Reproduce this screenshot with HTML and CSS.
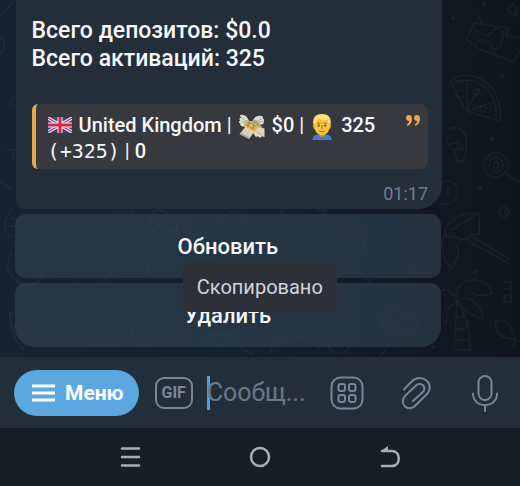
FILE: index.html
```html
<!DOCTYPE html>
<html lang="ru">
<head>
<meta charset="utf-8">
<meta name="viewport" content="width=device-width, initial-scale=1">
<title>Чат</title>
<link rel="stylesheet" href="styles.css">
</head>
<body>
<div class="app">
  <main class="chat">
    <svg class="doodles" viewBox="0 0 520 357" preserveAspectRatio="xMaxYMin slice" aria-hidden="true">
      <g fill="none" stroke="currentColor" stroke-width="1.5" stroke-linecap="round" stroke-linejoin="round">
        <path d="M474 23l35 5-3 8 14 2M474 23l-7 17 12 9 35 13 6-12M474 30l14 6 8-8 8 4-4 15-7 3-3-7-7-5-8 6M478 16l4 6M508 8l5-4 4 5-1 7-7-4z"/>
        <path d="M450 81c10-8 28-9 40 5 8 10 12 22 10 35l-34-10zM455 82c15-5 28 1 34 9 5 7 8 16 7 26M467 84v27l26-9M466 111l13-22"/>
        <circle cx="460" cy="94" r="4"/><circle cx="476" cy="92" r="3"/><circle cx="483" cy="109" r="3"/>
        <path d="M449 129c8-4 16 1 17 9v18l-4 6-5-2-3-10c-6-4-8-8-7-12M451 144l10-2M452 150l11-2"/>
        <circle cx="496" cy="165" r="12"/><circle cx="496" cy="165" r="7"/><circle cx="496" cy="165" r="3"/>
        <path d="M506 174l14 8M441 183c8-5 16 0 17 9 0 9-9 14-17 12M448 186v10"/>
        <path d="M444 235c2-12 15-24 36-22l-1 22c-5-2-9-1-11 5-7-2-10 0-11 8 3 8 0 14-6 20-7-8-12-19-7-33zM444 235l24 5M451 230l28-17M470 242l38 21M473 237l36 22"/>
        <circle cx="504" cy="212" r="5"/><path d="M504 209l2 6M504 282h7v20h-7v-7h6M504 289h6"/>
        <path d="M456 302c-5-14-12-15-18-9M457 302c-4-13 5-21 14-22 9-1 20 5 21 13-8 4-14 4-20 0M458 302c8-9 22-1 25 17-10-1-18-8-25-17zM457 302c-8 3-12 11-11 21M457 302l-3 48h16c0-22-5-38-13-48M456 318l8-2M455 330l12-2M455 341l14-2"/>
        <path d="M496 323c5-7 15 0 19 16l5 2M496 323c-2 9 5 16 19 16l-2 8"/>
        <path d="M1 16l12-14M0 37c7 4 5 15-1 17M15 97c-5 1-5 8 0 9M6 150h9l-3 8M0 181l11 8M12 209c-7 8-10 19-3 26 3 3 8 1 12-2M11 218l9 2M10 226l10 1M12 252c-10 16 0 32 16 33 12 0 18-12 14-22M9 313l18 2c8 6 0 25-4 35l-8-12zM10 328l14-2"/>
        <path d="M77 215l12 11M112 212h22l-3 8M155 210c-8 9-7 19 3 23l19-3c-1-12-10-21-22-20M161 224c-9 3-9 15-1 18l12-7M220 220c8-10 18-11 24-2M281 210l5 7h-5zM316 210h10l-4 6M314 231c6-7 14-3 12 4l-8 6M342 238l12-13 12 6-3 21-12 9-8-9zM347 238l13-1M347 247l12-2"/>
        <path d="M145 260l8 18M103 267l8 6-7 8M333 280c11-13 32-9 38 5M408 278c4-18 18-18 25-9M382 319l10-13 9 10 12-4 7 18-34 5zM390 320l8 12M132 335c4-18 20-20 24 2-4 12-20 15-24-2zM138 339l10-7M204 336c10 15 28 11 32-6M209 334l20 1M270 354c0-20 36-26 50-5M326 341c4 16 22 17 26 0M380 356l8-10M94 233c-9 4-9 12-1 15M63 327l8-6M241 347l12 8"/>
        <g fill="currentColor" stroke="none"><circle cx="453" cy="18" r="2"/><circle cx="484" cy="4" r="2"/><circle cx="502" cy="76" r="2"/><circle cx="492" cy="139" r="2"/><circle cx="480" cy="188" r="2"/><circle cx="475" cy="272" r="2"/><circle cx="433" cy="347" r="2"/></g>
      </g>
    </svg>

    <article class="message">
      <p class="stats">Всего депозитов: $0.0<br>Всего активаций: 325</p>
      <blockquote class="quote">
        <svg class="quote-mark" viewBox="0 0 14 11" aria-hidden="true"><path fill="currentColor" d="M3 0C1.200 0 0 1.300 0 3s1.200 3 3 3c0 1.500-.8 2.600-2 3.500-.8.700 0 1.700 1 1.200C4.500 9.500 6 7 6 3.600 6 1.400 4.900 0 3 0zM11 0C9.200 0 8 1.300 8 3s1.200 3 3 3c0 1.500-.8 2.600-2 3.500-.8.700 0 1.700 1 1.200 2.500-1.200 4-3.700 4-7.100C14 1.400 12.900 0 11 0z"/></svg>
        <svg class="flag" viewBox="0 0 24 16" role="img" aria-label="Флаг Великобритании">
          <path fill="#29479b" d="M0 1Q6-1 12 0.500T24 0.500V15Q18 17 12 15.500T0 15.500z"/>
          <path stroke="#e6e6ee" stroke-width="3.500" d="M0 1l24 14M24 1L0 15"/>
          <path stroke="#d9304a" stroke-width="1.300" d="M0 1l24 14M24 1L0 15"/>
          <path stroke="#eeeef2" stroke-width="5" d="M12 0v16M0 8h24"/>
          <path stroke="#d7263f" stroke-width="3" d="M12 0v16M0 8h24"/>
        </svg>
        United Kingdom <span class="bar">|</span>
        <svg class="money" viewBox="0 0 28 27" role="img" aria-label="Деньги с крыльями">
          <path fill="#dedbd0" d="M11 8C10 3 6 0 2 1c-1 1 0 2 1 3-2 0-3 1-1 3-2 0-2 2 0 3-1 2 1 3 3 3l5 2zM15 8c0-4 4-7 9-6 2 1 2 2 1 3 2 0 2 2 1 3 1 2-1 3-3 3l-5 2z"/>
          <path fill="#a3a18d" d="M8 9l10-3 7 8-7 4-8 1z"/>
          <path fill="#d5d2ba" d="M12 7l8 6-9 13-9-6z"/><path fill="#afac90" d="M2 19l9 5v2l-10-5z"/>
          <path fill="#dcd8c4" d="M18 13l9 2v9l-3-1-1 2-3-2-2 1-4-6z"/>
          <path fill="#e7b33f" d="M9 6l12 7-4 6-12-7z"/><path fill="#9b9069" d="M11 8l7 4-3 4-7-4z"/><circle cx="13" cy="12" r="2" fill="#e3bd5b"/>
          <path fill="none" stroke="#a7a69b" d="M3 4l6 4M3 8l5 1M19 8l5-3M20 9l5-1M19 18l5 4"/>
        </svg>
        $0 <span class="bar">|</span>
        <svg class="man" viewBox="0 0 22 27" role="img" aria-label="Мужчина">
          <path fill="#447bc4" d="M1 27c0-5 4-6 10-6s10 1 10 6z"/><path fill="#cf8f25" d="M8 19h6v4l-3 1-3-1z"/>
          <path fill="#e5a728" d="M1.500 11h3v5c-2 0-3-2-3-5zM17.500 11h3c0 3-1 5-3 5z"/>
          <path fill="#f8c43b" d="M3 8Q4 2 11 2t8 6v5c0 5-4 9-8 9s-8-4-8-9z"/>
          <path fill="#ffdf7a" d="M2 11C1 3 5 0 11 0s10 3 9 11l-2-1-1-4C13 7 9 6 6 5l-2 5z"/>
          <circle cx="7.500" cy="12" r="1.200" fill="#71502d"/><circle cx="14.500" cy="12" r="1.200" fill="#71502d"/>
          <path fill="none" stroke="#a56222" stroke-linecap="round" d="M6 9.500h3M13 9.500h3M11 12v3M8.500 18q2.500 1 5 0"/>
        </svg>
        325<br><code>(+325)</code><span class="bar"> | </span>0
      </blockquote>
      <time class="time">01:17</time>
    </article>

    <div class="keyboard">
      <button class="key" type="button">Обновить</button>
      <button class="key key-last" type="button">Удалить</button>
      <div class="toast" role="status">Скопировано</div>
    </div>
  </main>

  <form class="composer">
    <button class="menu" type="button">
      <svg class="menu-icon" viewBox="0 0 24 20" aria-hidden="true"><path stroke="currentColor" stroke-width="3" d="M0 3h23M0 10h23M0 17h23"/></svg>
      Меню
    </button>
    <button class="tool gif" type="button" aria-label="Анимации"><span class="gif-label">GIF</span></button>
    <div class="field">
      <input class="input" type="text" placeholder="Сообщ..." aria-label="Сообщение">
    </div>
    <button class="tool" type="button" aria-label="Стикеры">
      <svg class="tool-icon" viewBox="0 0 34 34"><g fill="none" stroke="currentColor" stroke-width="2"><rect x="1.500" y="1.500" width="31" height="31" rx="9"/><rect x="8.500" y="8" width="6.500" height="7" rx="2"/><rect x="19" y="8" width="6.500" height="7" rx="2"/><rect x="8.500" y="19" width="6.500" height="7" rx="2"/><rect x="19" y="19" width="6.500" height="7" rx="2"/></g></svg>
    </button>
    <button class="tool clip" type="button" aria-label="Прикрепить">
      <svg class="tool-icon" viewBox="0 0 34 34"><path fill="none" stroke="currentColor" stroke-width="2" stroke-linecap="round" stroke-linejoin="round" d="M5 13.500l7.500-7.800C17 1 23 1 27.500 4.500c4.500 4 4 10 .5 13.500L17 29c-3.500 4-8 4-11 1.500-3-3-3-7.500.5-11L17 9.500c2-2 5-2 7-.2 2 2 1.700 4.800-.2 6.700L14 25"/></svg>
    </button>
    <button class="tool mic" type="button" aria-label="Голосовое сообщение">
      <svg class="tool-icon" viewBox="0 0 34 38"><g fill="none" stroke="currentColor" stroke-width="2" stroke-linecap="round"><rect x="10.500" y="2" width="13" height="24" rx="6.500"/><path d="M5 19.500c0 7 5 11.500 12 11.500s12-4.500 12-11.500M17 31v6"/></g></svg>
    </button>
  </form>

  <nav class="system" aria-label="Системная навигация">
    <button class="sys" type="button" aria-label="Недавние"><svg class="sys-icon" viewBox="0 0 22 22"><path stroke="currentColor" stroke-width="2.500" stroke-linecap="round" d="M3 2.500h17M3 11h17M3 19.500h17"/></svg></button>
    <button class="sys" type="button" aria-label="Домой"><svg class="sys-icon" viewBox="0 0 22 22"><circle cx="11" cy="11" r="9" fill="none" stroke="currentColor" stroke-width="2.500"/></svg></button>
    <button class="sys" type="button" aria-label="Назад"><svg class="sys-icon" viewBox="0 0 22 22"><path fill="currentColor" d="M2 5l7-5v5z"/><path fill="none" stroke="currentColor" stroke-width="2.500" stroke-linecap="round" stroke-linejoin="round" d="M3 5h10c9 0 9 15 0 15H3"/></svg></button>
  </nav>
</div>
</body>
</html>
```
FILE: styles.css
```css
* {
  box-sizing: border-box;
}

body {
  margin: 0;
  background: #171e27;
  color: #f5f7f8;
  font-family: Roboto, "Liberation Sans", sans-serif;
}

button {
  margin: 0;
  padding: 0;
  border: 0;
  background: none;
  color: inherit;
  font: inherit;
}

svg {
  display: block;
}

.app {
  display: flex;
  flex-direction: column;
  min-height: 100vh;
}

.chat {
  position: relative;
  flex: 1;
  padding: 0 15% 10px 3%;
  background: linear-gradient(90deg, #172330 0%, #132230 45%, #101923 83%, #0e151e 100%);
}

.doodles {
  position: absolute;
  inset: 0;
  width: 100%;
  height: 100%;
  color: rgba(118, 145, 170, 0.09);
}

.message {
  position: relative;
  padding: 17px 14px 4px 16px;
  border-radius: 0 0 24px 8px;
  background: #232e3b;
}

.stats {
  margin: 0 0 31px;
  font-size: 23px;
  font-weight: 500;
  line-height: 28px;
}

.quote {
  position: relative;
  margin: 0;
  padding: 8px 32px 5px 12px;
  border-left: 4px solid #e9a550;
  border-radius: 6px 8px 8px 6px;
  background: #37393f;
  font-size: 20px;
  font-weight: 500;
  line-height: 26px;
}

.quote-mark {
  position: absolute;
  top: 11px;
  right: 8px;
  width: 14px;
  height: 11px;
  color: #e9a550;
}

.flag,
.money,
.man {
  display: inline-block;
}

.flag {
  width: 24px;
  height: 16px;
  margin-right: 2px;
  vertical-align: -1px;
}

.money,
.man {
  height: 26px;
  margin: -6px 1px;
  vertical-align: -2px;
}

.money {
  width: 28px;
}

.man {
  width: 24px;
  margin-right: 2px;
}

.quote code {
  font-family: "DejaVu Sans Mono", monospace;
  font-size: 20px;
  font-weight: 400;
}

.bar {
  font-weight: 400;
}

.time {
  display: block;
  margin-top: 14px;
  color: #6f7e8f;
  font-size: 18px;
  line-height: 22px;
  text-align: right;
}

.keyboard {
  position: relative;
  display: grid;
  gap: 5px;
  margin: 5px 1px 0 -1px;
}

.key {
  height: 64px;
  border-radius: 10px;
  background: rgba(48, 65, 80, 0.65);
  font-size: 22px;
  font-weight: 500;
}

.key-last {
  border-radius: 10px 10px 20px 20px;
}

.toast {
  position: absolute;
  top: 48px;
  left: 50%;
  margin-left: -45px;
  padding: 12px 14px;
  border-radius: 6px;
  background: #2e3039;
  color: #d3d4d7;
  font-size: 20px;
  line-height: 26px;
}

.composer {
  display: flex;
  align-items: center;
  height: 71px;
  padding: 0 18px 0 14px;
  background: #232e3b;
  color: #77879a;
}

.menu {
  display: flex;
  align-items: center;
  gap: 9px;
  height: 46px;
  padding: 0 15px 0 18px;
  border-radius: 23px;
  background: #5ca7e0;
  color: #fff;
  font-size: 21px;
  font-weight: 700;
}

.menu-icon {
  width: 24px;
  height: 20px;
}

.tool {
  flex: none;
  width: 34px;
}

.tool-icon {
  width: 100%;
}

.gif {
  width: 38px;
  height: 32px;
  margin-left: 16px;
  border: 2px solid currentColor;
  border-radius: 9px;
}

.gif-label {
  font-size: 16px;
  font-weight: 700;
}

.field {
  flex: 1;
  min-width: 0;
  margin: 0 20px 0 14px;
  box-shadow: inset 3px 0 #4c9fe0;
}

.input {
  display: block;
  width: 100%;
  height: 34px;
  padding: 0;
  border: 0;
  outline: 0;
  background: none;
  color: #f5f7f8;
  font: 400 25px Roboto, "Liberation Sans", sans-serif;
}

.input::placeholder {
  color: #6b7888;
  opacity: 1;
}

.clip,
.mic {
  margin-left: 35px;
}

.system {
  display: grid;
  grid-template-columns: repeat(3, 1fr);
  height: 58px;
  padding: 0 12.5%;
  background: #171e27;
  color: #abaeb3;
}

.sys {
  display: grid;
  place-items: center;
}

.sys-icon {
  width: 22px;
  height: 22px;
}
```
